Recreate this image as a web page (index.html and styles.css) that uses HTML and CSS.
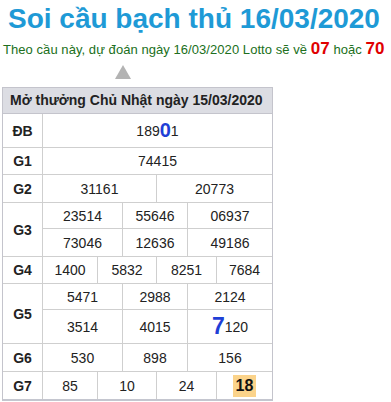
FILE: index.html
```html
<!DOCTYPE html>
<html lang="vi">
<head>
<meta charset="utf-8">
<link rel="stylesheet" href="styles.css">
</head>
<body>
<h1 class="title">Soi cầu bạch thủ 16/03/2020</h1>
<p class="lead">Theo cầu này, dự đoán ngày 16/03/2020 Lotto sẽ về <b class="hot">07</b> hoặc <b class="hot">70</b></p>
<div class="pointer"><span class="tri"></span></div>
<div class="result">
  <div class="caption">Mở thưởng Chủ Nhật ngày 15/03/2020</div>
  <div class="grid">
    <div class="lbl">ĐB</div>
    <div class="c span6">189<b class="pick">0</b>1</div>

    <div class="lbl">G1</div>
    <div class="c span6">74415</div>

    <div class="lbl">G2</div>
    <div class="c span3">31161</div>
    <div class="c span3 end">20773</div>

    <div class="lbl two">G3</div>
    <div class="c span2">23514</div>
    <div class="c span2">55646</div>
    <div class="c span2 end">06937</div>
    <div class="c span2">73046</div>
    <div class="c span2">12636</div>
    <div class="c span2 end">49186</div>

    <div class="lbl">G4</div>
    <div class="c">1400</div>
    <div class="c span2">5832</div>
    <div class="c span2">8251</div>
    <div class="c end">7684</div>

    <div class="lbl two">G5</div>
    <div class="c span2">5471</div>
    <div class="c span2">2988</div>
    <div class="c span2 end">2124</div>
    <div class="c span2">3514</div>
    <div class="c span2">4015</div>
    <div class="c span2 end"><b class="pick big">7</b>120</div>

    <div class="lbl">G6</div>
    <div class="c span2">530</div>
    <div class="c span2">898</div>
    <div class="c span2 end">156</div>

    <div class="lbl last">G7</div>
    <div class="c last">85</div>
    <div class="c span2 last">10</div>
    <div class="c span2 last">24</div>
    <div class="c end last"><b class="mark">18</b></div>
  </div>
</div>
</body>
</html>
```
FILE: styles.css
```css
* { box-sizing: border-box; }
body {
  margin: 0;
  background: #fff;
  font-family: "Liberation Sans", Arial, sans-serif;
  color: #222;
}
.title {
  margin: 0;
  padding: 2px 0 0 8px;
  font-size: 28px;
  line-height: 34px;
  font-weight: bold;
  color: #1e9ad6;
  white-space: nowrap;
}
.lead {
  margin: 0;
  padding: 4px 0 0 3px;
  font-size: 13px;
  line-height: 18px;
  color: #206f20;
  white-space: nowrap;
  letter-spacing: 0.06px;
}
.hot {
  color: #e00000;
  font-size: 17px;
}
.pointer {
  height: 28px;
  padding: 6px 0 0 115px;
}
.tri {
  display: block;
  width: 0;
  height: 0;
  border-left: 8px solid transparent;
  border-right: 8px solid transparent;
  border-bottom: 14px solid #b3b3b3;
}
.result {
  margin-left: 2px;
  width: 271px;
  border: 1px solid #c4c4cc;
  border-bottom: 2px solid #c4c6cf;
}
.caption {
  height: 26px;
  line-height: 25px;
  padding-left: 7px;
  background: #dcdde3;
  border-bottom: 1px solid #c4c4cc;
  font-size: 14px;
  font-weight: bold;
  color: #222;
  white-space: nowrap;
}
.grid {
  display: grid;
  grid-template-columns: 40px 55px 25px 34px 31px 29px 55px;
  grid-template-rows: 34px 27px 28px 26px 28px 27px 26px 34px 28px 27px;
}
.grid > div {
  border-right: 1px solid #cfcfcf;
  border-bottom: 1px solid #cfcfcf;
  display: flex;
  align-items: center;
  justify-content: center;
  font-size: 14px;
  color: #222;
}
.grid > .span6, .grid > .end { border-right: none; }
.grid > .last { border-bottom: none; }
.lbl {
  font-weight: bold;
  color: #444;
}
.lbl.two { grid-row: span 2; }
.span6 { grid-column: span 6; }
.span3 { grid-column: span 3; }
.span2 { grid-column: span 2; }
.pick {
  color: #1f3fd6;
  font-size: 20px;
  font-weight: bold;
}
.pick.big {
  font-size: 23px;
}
.mark {
  background: #fbd38a;
  color: #111;
  font-size: 16px;
  padding: 2px 3px;
}
```
